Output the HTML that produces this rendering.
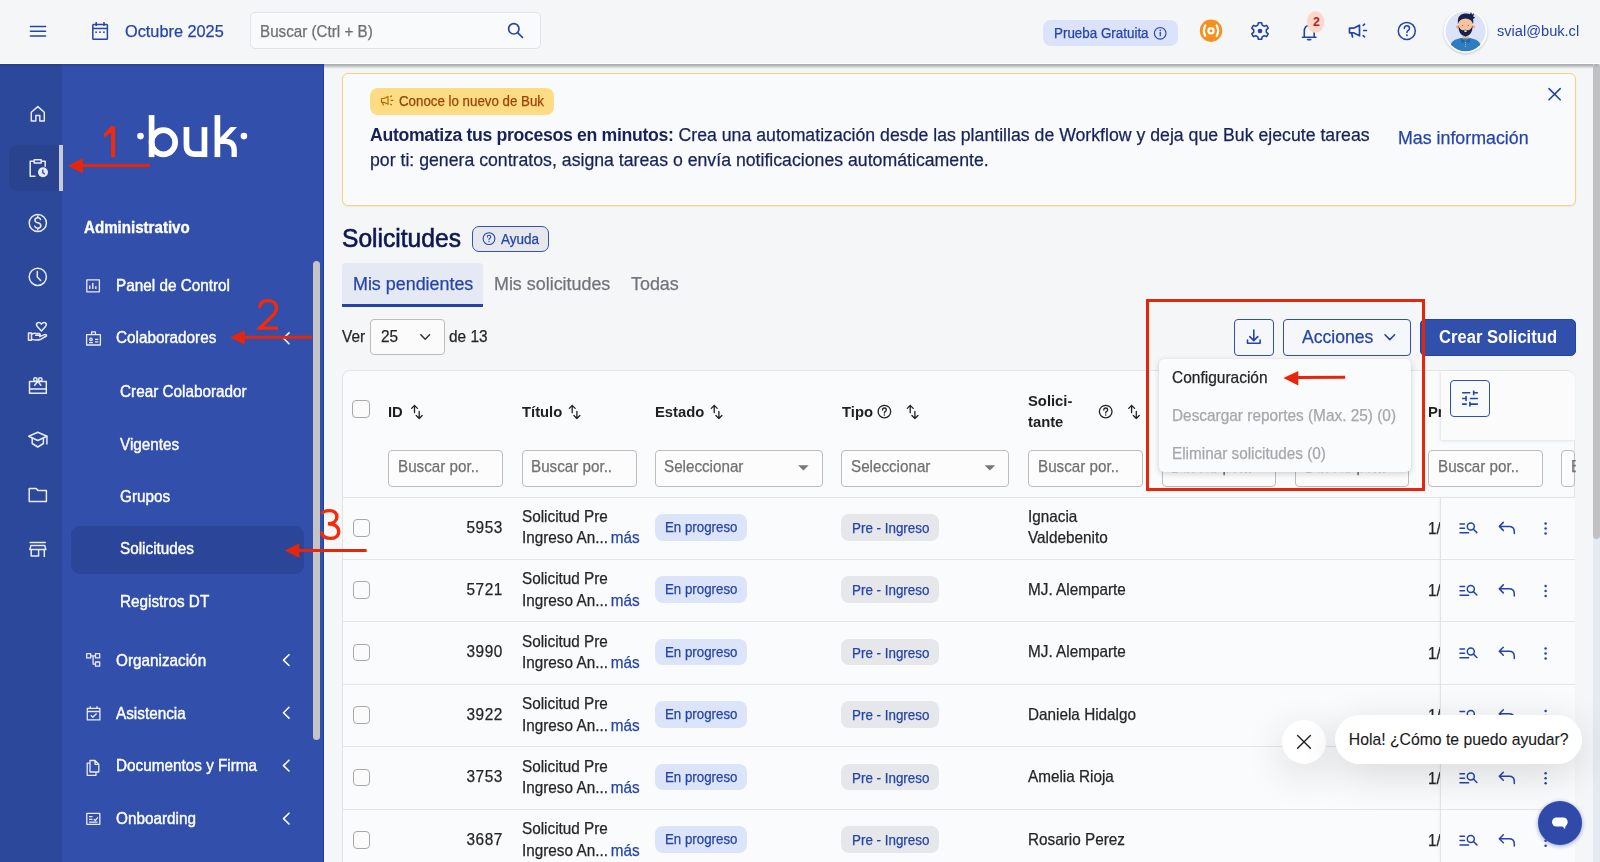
<!DOCTYPE html>
<html lang="es">
<head>
<meta charset="utf-8">
<title>Solicitudes - Buk</title>
<style>
*{box-sizing:border-box;margin:0;padding:0}
html,body{width:1600px;height:862px;overflow:hidden}
body{position:relative;background:#f5f6f8;font-family:"Liberation Sans",sans-serif;color:#262626}
.a{position:absolute}
.t{position:absolute;line-height:1;white-space:nowrap;-webkit-text-stroke-width:0.25px}
b,.bd{-webkit-text-stroke-width:0!important}
svg{position:absolute;overflow:visible}
/* header */
#hdr{position:absolute;left:0;top:0;width:1600px;height:64px;background:#f5f6f8;border-bottom:1px solid #fff;z-index:5;box-shadow:0 1px 3px rgba(0,0,0,.18)}
.blue{color:#2444ab}
/* rail */
#rail{position:absolute;left:0;top:64px;width:62px;height:798px;background:#2c489b}
#side{position:absolute;left:62px;top:64px;width:262px;height:798px;background:#314fab;border-right:1.5px solid #1a43a8}
.mi{color:#fff;font-size:16.07px;-webkit-text-stroke-width:0.4px!important}
.ico{stroke:#e9ecf5;fill:none;stroke-width:1.5;stroke-linecap:round;stroke-linejoin:round}
.sico{stroke:#e9ecf5;fill:none;stroke-width:1.3;stroke-linejoin:round}
.red{color:#e5220c}
</style>
</head>
<body>

<!-- ============ HEADER ============ -->
<div id="hdr">
  <div class="a" style="left:250px;top:12px;width:291px;height:37px;border:1px solid #e2e4e9;border-radius:5px;background:#f9fafb"></div>
  <div class="t" style="transform:scaleX(0.9524);transform-origin:0 0;left:260px;top:23.5px;font-size:15.96px;color:#6f6f6f">Buscar (Ctrl + B)</div>
  <div class="t blue" style="transform:scaleX(0.9524);transform-origin:0 0;left:125px;top:22.5px;font-size:17.12px">Octubre 2025</div>
  <svg width="1600" height="64" style="left:0;top:0">
    <g stroke="#2444ab" stroke-width="1.6" stroke-linecap="round">
      <line x1="30.5" y1="26.5" x2="45.5" y2="26.5"/>
      <line x1="30.5" y1="31.3" x2="45.5" y2="31.3"/>
      <line x1="30.5" y1="36" x2="45.5" y2="36"/>
    </g>
    <g stroke="#2444ab" stroke-width="1.5" fill="none">
      <rect x="92.8" y="24.5" width="14.6" height="14.8" rx="0.8"/>
      <line x1="92.8" y1="28.5" x2="107.4" y2="28.5"/>
      <line x1="96.2" y1="22" x2="96.2" y2="26"/>
      <line x1="104" y1="22" x2="104" y2="26"/>
    </g>
    <g fill="#2444ab"><rect x="95.3" y="31.4" width="1.6" height="1.6"/><rect x="99.2" y="31.4" width="1.6" height="1.6"/><rect x="103.1" y="31.4" width="1.6" height="1.6"/></g>
    <g stroke="#2444ab" stroke-width="1.7" fill="none" stroke-linecap="round">
      <circle cx="513.8" cy="28.8" r="5.2"/>
      <line x1="517.6" y1="32.6" x2="522.5" y2="37.5"/>
    </g>
  </svg>
  <!-- right side -->
  <div class="a" style="left:1043px;top:20px;width:135px;height:26px;border-radius:8px;background:#dbe3fa"></div>
  <div class="t blue" style="transform:scaleX(0.9524);transform-origin:0 0;left:1053.5px;top:26px;font-size:14.07px">Prueba Gratuita</div>
  <svg width="1600" height="64" style="left:0;top:0">
    <g stroke="#2444ab" stroke-width="1.1" fill="none"><circle cx="1160.2" cy="33.3" r="5.8"/></g>
    <g fill="#2444ab"><rect x="1159.6" y="32" width="1.3" height="4.2"/><circle cx="1160.25" cy="30.4" r="0.8"/></g>
    <!-- orange icon -->
    <circle cx="1211" cy="30.7" r="11.2" fill="#f7911d"/>
    <g fill="none" stroke="#fff" stroke-width="2.2" stroke-linecap="round">
      <path d="M1205.3 25.5 Q1202.5 30.7 1205.3 35.9"/>
      <path d="M1216.7 25.5 Q1219.5 30.7 1216.7 35.9"/>
      <circle cx="1211" cy="30.7" r="2.6"/>
    </g>
    <!-- gear -->
    <g transform="translate(1260,31)" fill="none" stroke="#2444ab" stroke-width="1.6" stroke-linejoin="round">
      <path d="M-1.6 -8.3 L1.6 -8.3 L2.2 -5.9 L4.2 -4.8 L6.6 -5.6 L8.2 -2.9 L6.3 -1.2 L6.3 1.2 L8.2 2.9 L6.6 5.6 L4.2 4.8 L2.2 5.9 L1.6 8.3 L-1.6 8.3 L-2.2 5.9 L-4.2 4.8 L-6.6 5.6 L-8.2 2.9 L-6.3 1.2 L-6.3 -1.2 L-8.2 -2.9 L-6.6 -5.6 L-4.2 -4.8 L-2.2 -5.9 Z"/>
    </g>
    <circle cx="1260" cy="31" r="2.3" fill="#2444ab"/>
    <!-- bell -->
    <g fill="none" stroke="#2444ab" stroke-width="1.6" stroke-linecap="round" stroke-linejoin="round">
      <path d="M1302.5 37.2 H1316 M1304.3 37.2 V31.5 Q1304.3 25.5 1309.2 25.5 Q1314.2 25.5 1314.2 31.5 V37.2"/>
      <path d="M1307.7 39.6 H1310.7"/>
    </g>
    <ellipse cx="1315.6" cy="22" rx="8.6" ry="11" fill="#fdd8c8"/>
    <!-- megaphone -->
    <g fill="none" stroke="#2444ab" stroke-width="1.7" stroke-linejoin="round" stroke-linecap="round">
      <path d="M1349.5 28.2 H1353.5 L1359.5 25.2 V35.8 L1353.5 32.8 H1349.5 Z"/>
      <path d="M1351.5 33 L1352.6 37"/>
      <path d="M1363.2 25.3 L1364.6 24.2 M1363.8 30.5 H1366.4 M1363.2 35.7 L1364.6 36.8"/>
    </g>
    <!-- help -->
    <g fill="none" stroke="#2444ab" stroke-width="1.5" stroke-linecap="round">
      <circle cx="1406.8" cy="30.9" r="8.5"/>
      <path d="M1404.3 28.6 Q1404.3 25.8 1406.9 25.8 Q1409.5 25.8 1409.5 28.3 Q1409.5 30 1407.7 30.8 Q1406.9 31.3 1406.9 32.6"/>
    </g>
    <circle cx="1406.9" cy="35.3" r="0.95" fill="#2444ab"/>
    <!-- avatar -->
    <circle cx="1465.6" cy="31.2" r="21.8" fill="#fff" style="filter:drop-shadow(0 1px 1.2px rgba(0,0,0,.2))"/>
    <circle cx="1465.6" cy="31.2" r="20" fill="#dce3f8"/>
    <defs><clipPath id="avc"><circle cx="1465.6" cy="31.2" r="20"/></clipPath></defs>
    <g clip-path="url(#avc)">
      <path d="M1449.5 49 Q1450 40.5 1458 38.8 L1465.5 37.2 L1473 38.8 Q1481 40.5 1481.8 49 Q1474 54 1465.5 54 Q1457 54 1449.5 49 Z" fill="#2d7dc0"/>
      <rect x="1462.6" y="33.5" width="5.8" height="5" fill="#eeb08a"/>
      <path d="M1460 38 L1465.5 41.2 L1471 38 L1468.8 43.6 L1465.5 40.8 L1462.2 43.6 Z" fill="#1e64a3"/>
      <g fill="#c9a46a"><circle cx="1465.5" cy="42.2" r="0.55"/><circle cx="1465.5" cy="44.4" r="0.55"/><circle cx="1465.5" cy="46.4" r="0.55"/></g>
      <circle cx="1457.6" cy="26.8" r="1.6" fill="#eea985"/><circle cx="1473.4" cy="26.8" r="1.6" fill="#eea985"/>
      <ellipse cx="1465.5" cy="25.2" rx="6.8" ry="8.6" fill="#f6c39c"/>
      <path d="M1458.4 25 Q1458.3 35.8 1465.5 36.4 Q1472.7 35.8 1472.6 25 Q1471.6 29.6 1468.2 30.2 Q1465.5 29.2 1462.8 30.2 Q1459.4 29.6 1458.4 25 Z" fill="#17224a"/>
      <rect x="1464.4" y="30.3" width="2.2" height="1.6" fill="#fff"/>
      <path d="M1457.9 24.2 Q1456.8 14.6 1464.5 13.6 Q1468 13.1 1470 14.2 L1471 12 L1472.1 14.6 L1474.2 13.2 L1473.2 16.4 L1475.2 17.4 L1473.1 19 Q1473.7 22 1473 24.2 Q1471.6 18.6 1465.5 18.4 Q1459.4 18.6 1457.9 24.2 Z" fill="#17224a"/>
      <g fill="#8a6a55"><circle cx="1462.6" cy="25.4" r="0.6"/><circle cx="1468.4" cy="25.4" r="0.6"/></g>
    </g>
  </svg>
  <div class="t bd" style="left:1313px;top:16px;font-size:12.5px;font-weight:700;color:#b3222b">2</div>
  <div class="t blue" style="transform:scaleX(0.9524);transform-origin:0 0;left:1497px;top:22.6px;font-size:15.33px;-webkit-text-stroke-width:0">svial@buk.cl</div>
</div>

<!-- ============ RAIL + SIDEBAR ============ -->
<div id="rail"></div>
<div id="side"></div>
<!-- active rail item -->
<div class="a" style="left:9px;top:145px;width:50px;height:46px;background:#29438f;border-radius:8px 0 0 8px"></div>
<div class="a" style="left:58.5px;top:145px;width:4px;height:46px;background:#c9ccd6"></div>
<svg width="62" height="862" style="left:0;top:0">
 <g class="ico">
  <!-- home -->
  <path d="M31.3 120.9 V112.2 L37.8 106.6 L44.3 112.2 V120.9 H39.8 V115.6 H35.8 V120.9 Z"/>
  <!-- clipboard clock -->
  <path d="M35 176.3 H30.2 V161.3 H33.5 M42 161.3 H45.2 V166.3"/>
  <path d="M34.2 159.7 H41.2 V163 H34.2 Z"/>
  <!-- dollar -->
  <circle cx="37.8" cy="223" r="8.6"/>
  <path d="M40.6 219.6 Q40 217.8 37.8 217.8 Q35 217.8 35 220.3 Q35 222.3 37.8 222.8 Q40.8 223.4 40.8 225.8 Q40.8 228.2 37.8 228.2 Q35.3 228.2 34.8 226.3 M37.8 216 V217.8 M37.8 228.2 V230"/>
  <!-- clock -->
  <circle cx="37.8" cy="276.8" r="8.6"/>
  <path d="M37.3 271.6 V277 L40.6 280.5"/>
  <!-- hand heart -->
  <path d="M28.5 333 H31.5 V340.3 H28.5 Z M31.5 334.2 Q34.5 332.8 37 333.6 H39.5 Q41 334.3 39.5 335.3 H35.6 M31.5 339.1 Q36.5 341 41 339.2 L46.4 336 Q46.8 334.5 45.2 334.4 L39.6 336.6"/>
  <path d="M41.4 331 L37.3 326.6 Q35.6 324.3 37.4 322.9 Q39.6 321.8 41.4 324.1 Q43.2 321.8 45.4 322.9 Q47.2 324.3 45.5 326.6 Z"/>
  <!-- gift -->
  <path d="M29.5 381.6 H46.3 V393.3 H29.5 Z M29.5 388.9 H46.3"/>
  <circle cx="35.4" cy="379.5" r="1.7"/><circle cx="40.3" cy="379.5" r="1.7"/><path d="M37.8 381.2 L34.7 385.2 M37.8 381.2 L40.9 385.2"/>
  <!-- grad cap -->
  <path d="M28.7 436.2 L37.8 432.3 L46.9 436.2 L37.8 440.5 Z"/>
  <path d="M32.2 438.2 V443.5 L37.8 447 L43.4 443.5 V438.2 M46.9 436.2 V444"/>
  <!-- folder -->
  <path d="M29.2 488.6 H36.2 L38.2 490.6 H46.4 V501.4 H29.2 Z"/>
  <!-- store -->
  <path d="M30.1 542.5 H45.3 M30.9 545.6 H44.8 L45.8 549.6 H29.8 Z M31.2 549.6 V555.9 H38.6 V549.6 M44.3 549.6 V556.4"/>
 </g>
 <!-- clock badge on clipboard -->
 <circle cx="43" cy="172.2" r="5" fill="#e9ecf5"/>
 <path d="M42.8 169.6 V172.6 L44.8 174.2" stroke="#2c489b" stroke-width="1.3" fill="none"/>
</svg>

<!-- logo -->
<svg width="330" height="862" style="left:0;top:0">
 <g fill="#fff">
  <circle cx="140.5" cy="136.1" r="3.3"/>
  <circle cx="243.9" cy="136.1" r="3.3"/>
 </g>
 <g fill="none" stroke="#fff" stroke-width="5.7">
  <line x1="151.6" y1="115.1" x2="151.6" y2="157.1"/>
  <ellipse cx="163.4" cy="142.2" rx="11.8" ry="12.1"/>
  <path d="M186.45 127.1 V145 Q186.45 154.2 195.4 154.2 H204.45"/>
  <line x1="204.45" y1="127.1" x2="204.45" y2="157.1"/>
  <line x1="217.4" y1="115.1" x2="217.4" y2="157.1"/>
 </g>
 <path d="M219.5 138.6 L230.6 127.1 H237 L223.8 141.5 Z" fill="#fff"/>
 <path d="M219 141.4 H225.5 Q234.2 141.6 234.2 150.5 V157.1" fill="none" stroke="#fff" stroke-width="5.3"/>
</svg>

<div class="t bd" style="transform:scaleX(0.9524);transform-origin:0 0;left:84.2px;top:220.4px;font-size:15.86px;font-weight:700;color:#fff;-webkit-text-stroke:0.35px #fff!important">Administrativo</div>

<!-- menu items -->
<div class="t mi" style="transform:scaleX(0.9524);transform-origin:0 0;left:115.5px;top:277px">Panel de Control</div>
<div class="t mi" style="transform:scaleX(0.9524);transform-origin:0 0;left:115.5px;top:329.4px">Colaboradores</div>
<div class="t mi" style="transform:scaleX(0.9524);transform-origin:0 0;left:120.3px;top:383.3px">Crear Colaborador</div>
<div class="t mi" style="transform:scaleX(0.9524);transform-origin:0 0;left:120.3px;top:436.1px">Vigentes</div>
<div class="a" style="left:71px;top:526px;width:233px;height:47.5px;background:#2b4699;border-radius:9px"></div>
<div class="t mi" style="transform:scaleX(0.9524);transform-origin:0 0;left:120.3px;top:488px">Grupos</div>
<div class="t mi" style="transform:scaleX(0.9524);transform-origin:0 0;left:120.3px;top:540.2px">Solicitudes</div>
<div class="t mi" style="transform:scaleX(0.9524);transform-origin:0 0;left:120.3px;top:593px">Registros DT</div>
<div class="t mi" style="transform:scaleX(0.9524);transform-origin:0 0;left:115.5px;top:651.5px">Organización</div>
<div class="t mi" style="transform:scaleX(0.9524);transform-origin:0 0;left:115.5px;top:704.5px">Asistencia</div>
<div class="t mi" style="transform:scaleX(0.9524);transform-origin:0 0;left:115.5px;top:757px">Documentos y Firma</div>
<div class="t mi" style="transform:scaleX(0.9524);transform-origin:0 0;left:115.5px;top:810.3px">Onboarding</div>

<svg width="330" height="862" style="left:0;top:0">
 <g class="sico">
  <!-- panel -->
  <rect x="86.8" y="279.8" width="12.6" height="12" />
  <path d="M89.8 289 V285.5 M92.8 289 V283 M95.8 289 V286.3" stroke-width="1.4"/>
  <!-- colaboradores id badge -->
  <rect x="86.6" y="334.6" width="13.8" height="10.4"/>
  <path d="M91.6 334.6 V331.8 H95.4 V334.6"/>
  <path d="M89 342.6 H93 M95 339.3 H98.3 M95 341.8 H98.3"/>
  <circle cx="91" cy="339.4" r="1.2"/>
  <!-- org -->
  <path d="M86.7 653.7 H90.7 V657.9 H86.7 Z M95.5 653.7 H99.7 V657.9 H95.5 Z M95.5 662 H99.7 V666.2 H95.5 Z M90.7 655.8 H95.5 M93.1 655.8 V664.1 H95.5"/>
  <!-- calendar check -->
  <rect x="87.3" y="708.3" width="12.6" height="11.6"/>
  <path d="M87.3 711.5 H99.9 M90.2 706.2 V709 M97 706.2 V709 M90.8 715.3 L92.8 717.3 L96.6 713.5"/>
  <!-- documents -->
  <path d="M90 760.5 H95 L98.8 764.3 V772 H90 Z M95 760.5 V764.3 H98.8"/>
  <path d="M90 763.2 H87.2 V775.3 H96 V772"/>
  <!-- onboarding -->
  <rect x="86.8" y="813.3" width="13" height="11"/>
  <path d="M89 816.7 H92.5 M89 819.4 H92.5 M89 822.2 H97.5 M93.8 819.3 L95.3 820.6 L97.8 817.3"/>
 </g>
 <g fill="none" stroke="#fff" stroke-width="1.6" stroke-linecap="round" stroke-linejoin="round">
  <path d="M289 332.9 L283.5 338.3 L289 343.7"/>
  <path d="M289 654.7 L283.5 660.1 L289 665.5"/>
  <path d="M289 707.3 L283.5 712.7 L289 718.1"/>
  <path d="M289 760.2 L283.5 765.6 L289 771"/>
  <path d="M289 813.2 L283.5 818.6 L289 824"/>
 </g>
</svg>

<!-- sidebar scrollbar -->
<div class="a" style="left:313px;top:261px;width:7.2px;height:479px;background:#c4c4c6;border-radius:4px"></div>

<!-- ============ MAIN ============ -->
<!-- header shadow on content -->
<div class="a" style="left:324px;top:64px;width:1276px;height:5px;background:linear-gradient(#c4c5c8 0,#c4c5c8 1.5px,rgba(245,246,248,0))"></div>
<!-- page scrollbar -->
<div class="a" style="left:1593.2px;top:64px;width:6.8px;height:798px;background:#e5e9f4"></div>
<div class="a" style="left:1593.2px;top:64px;width:6.8px;height:475px;background:#c1c1c3;border-radius:3.4px"></div>

<!-- banner -->
<div class="a" style="left:342px;top:73px;width:1234px;height:132.5px;border:1.5px solid #f6d37c;border-radius:6px;background:#f9fafc;box-shadow:0 1px 2px rgba(0,0,0,.06)"></div>
<div class="a" style="left:370px;top:87.5px;width:184px;height:27px;border-radius:8px;background:#fddc83"></div>
<svg width="1600" height="220" style="left:0;top:0">
  <g fill="none" stroke="#b26a10" stroke-width="1.2" stroke-linejoin="round" stroke-linecap="round">
    <path d="M381.5 98.5 H384 L388 96.5 V104.3 L384 102.3 H381.5 Z M382.6 102.5 L383.3 105"/>
    <path d="M390.6 96.6 L391.5 96 M391 100.4 H392.8 M390.6 104.2 L391.5 104.8"/>
  </g>
  <g fill="none" stroke="#2444ab" stroke-width="1.6" stroke-linecap="round">
    <path d="M1549 88.6 L1560.2 99.8 M1560.2 88.6 L1549 99.8"/>
  </g>
</svg>
<div class="t" style="transform:scaleX(0.9524);transform-origin:0 0;left:399px;top:94.9px;font-size:13.97px;color:#9a4408">Conoce lo nuevo de Buk</div>
<div class="t" style="transform:scaleX(0.9524);transform-origin:0 0;left:370px;top:125.5px;font-size:18.59px;color:#17215a"><b style="letter-spacing:-0.36px">Automatiza tus procesos en minutos:</b> Crea una automatización desde las plantillas de Workflow y deja que Buk ejecute tareas</div>
<div class="t" style="transform:scaleX(0.9524);transform-origin:0 0;left:370px;top:150.5px;font-size:18.59px;color:#17215a">por ti: genera contratos, asigna tareas o envía notificaciones automáticamente.</div>
<div class="t" style="transform:scaleX(0.9524);transform-origin:0 0;left:1398px;top:129.3px;font-size:18.69px;color:#2444ab">Mas información</div>

<!-- heading -->
<div class="t" style="transform:scaleX(0.9524);transform-origin:0 0;left:342.3px;top:225.5px;font-size:25.83px;color:#0d174f;-webkit-text-stroke-width:0.6px">Solicitudes</div>
<div class="a" style="left:472px;top:225.6px;width:77px;height:26px;border:1.3px solid #3553b0;border-radius:7px;background:#e6e8ee"></div>
<svg width="1600" height="300" style="left:0;top:0">
  <g fill="none" stroke="#2444ab" stroke-width="1.1" stroke-linecap="round">
    <circle cx="489" cy="238.6" r="5.9"/>
    <path d="M487.3 237 Q487.3 235.2 489 235.2 Q490.7 235.2 490.7 236.8 Q490.7 237.9 489.6 238.4 Q489 238.8 489 239.7"/>
  </g>
  <circle cx="489" cy="241.6" r="0.7" fill="#2444ab"/>
</svg>
<div class="t" style="transform:scaleX(0.9524);transform-origin:0 0;left:501px;top:231.5px;font-size:14.18px;color:#2444ab">Ayuda</div>

<!-- tabs -->
<div class="a" style="left:342.3px;top:263px;width:140.5px;height:43.5px;background:#e5e9f3;border-radius:4px 4px 0 0;border-bottom:3px solid #2444ab"></div>
<div class="t" style="transform:scaleX(0.9524);transform-origin:0 0;left:352.9px;top:274.5px;font-size:18.79px;color:#2444ab">Mis pendientes</div>
<div class="t" style="transform:scaleX(0.9524);transform-origin:0 0;left:494px;top:274.5px;font-size:18.79px;color:#70737b">Mis solicitudes</div>
<div class="t" style="transform:scaleX(0.9524);transform-origin:0 0;left:631px;top:274.5px;font-size:18.79px;color:#70737b">Todas</div>

<!-- ver -->
<div class="t" style="transform:scaleX(0.9524);transform-origin:0 0;left:342.3px;top:328px;font-size:16.17px;color:#262626">Ver</div>
<div class="a" style="left:370.2px;top:319.3px;width:74.4px;height:36.2px;border:1px solid #bcbcbc;border-radius:4px;background:#fbfbfc"></div>
<div class="t" style="transform:scaleX(0.9524);transform-origin:0 0;left:380.5px;top:328px;font-size:16.17px;color:#262626">25</div>
<svg width="1600" height="400" style="left:0;top:0">
  <path d="M420.8 334.8 L425.2 339.2 L429.6 334.8" fill="none" stroke="#333" stroke-width="1.5" stroke-linecap="round" stroke-linejoin="round"/>
</svg>
<div class="t" style="transform:scaleX(0.9524);transform-origin:0 0;left:449px;top:328px;font-size:16.17px;color:#262626">de 13</div>

<!-- buttons -->
<div class="a" style="left:1233.7px;top:318.8px;width:40.3px;height:37.6px;border:1.3px solid #3050ad;border-radius:4px;background:#f6f7fa"></div>
<svg width="1600" height="400" style="left:0;top:0">
  <g fill="none" stroke="#2444ab" stroke-width="1.6" stroke-linecap="round" stroke-linejoin="round">
    <path d="M1253.8 330 V340.5 M1249.8 336.6 L1253.8 340.6 L1257.8 336.6 M1247.5 340 V343.2 H1260.1 V340"/>
  </g>
</svg>
<div class="a" style="left:1282.8px;top:318.8px;width:128px;height:37.6px;border:1.3px solid #3050ad;border-radius:4px;background:#f6f7fa"></div>
<div class="t" style="transform:scaleX(0.9524);transform-origin:0 0;left:1301.9px;top:327.5px;font-size:18.48px;color:#2444ab">Acciones</div>
<svg width="1600" height="400" style="left:0;top:0">
  <path d="M1385 334.8 L1389.8 339.6 L1394.6 334.8" fill="none" stroke="#2444ab" stroke-width="1.6" stroke-linecap="round" stroke-linejoin="round"/>
</svg>
<div class="a" style="left:1420.2px;top:318.8px;width:155.4px;height:37.6px;border-radius:5px;background:#3150ac;border:1px solid #2443a5"></div>
<div class="t bd" style="transform:scaleX(0.9524);transform-origin:0 0;left:1438.5px;top:328.5px;font-size:17.43px;font-weight:700;color:#fff">Crear Solicitud</div>

<!-- ============ TABLE ============ -->
<div class="a" style="left:341.9px;top:369.8px;width:1233.6px;height:520px;border:1px solid #e3e4e8;border-radius:8px;background:#fafbfc"></div>
<div class="a" style="left:352.3px;top:400.2px;width:17.5px;height:17.5px;border:1.3px solid #a9a9ab;border-radius:4px;background:#fbfbfc"></div>
<div class="t bd" style="transform:scaleX(0.9524);transform-origin:0 0;left:387.8px;top:403.5px;font-size:15.54px;font-weight:700;color:#1f1f1f">ID</div>
<div class="t bd" style="transform:scaleX(0.9524);transform-origin:0 0;left:521.5px;top:403.5px;font-size:15.54px;font-weight:700;color:#1f1f1f">Título</div>
<div class="t bd" style="transform:scaleX(0.9524);transform-origin:0 0;left:654.6px;top:403.5px;font-size:15.54px;font-weight:700;color:#1f1f1f">Estado</div>
<div class="t bd" style="transform:scaleX(0.9524);transform-origin:0 0;left:841.7px;top:403.5px;font-size:15.54px;font-weight:700;color:#1f1f1f">Tipo</div>
<div class="t bd" style="transform:scaleX(0.9524);transform-origin:0 0;left:1028px;top:392.5px;font-size:15.54px;font-weight:700;color:#1f1f1f">Solici-</div>
<div class="t bd" style="transform:scaleX(0.9524);transform-origin:0 0;left:1028px;top:413.6px;font-size:15.54px;font-weight:700;color:#1f1f1f">tante</div>
<div class="t bd" style="transform:scaleX(0.9524);transform-origin:0 0;left:1428.2px;top:403.5px;font-size:15.54px;font-weight:700;color:#1f1f1f">Pr</div>
<svg width="1600" height="862" style="left:0;top:0">
 <g fill="none" stroke="#222" stroke-width="1.3" stroke-linecap="round" stroke-linejoin="round">
  <path d="M414.5 412.7 V405.4 M411.6 408.4 L414.5 405.4 L417.5 408.4 M419.2 411.4 V418.5 M416.2 415.5 L419.2 418.5 L422.2 415.5"/>
  <path d="M572.2 412.7 V405.4 M569.3 408.4 L572.2 405.4 L575.2 408.4 M576.9 411.4 V418.5 M573.9 415.5 L576.9 418.5 L579.9 415.5"/>
  <path d="M714.2 412.7 V405.4 M711.3 408.4 L714.2 405.4 L717.2 408.4 M718.9 411.4 V418.5 M715.9 415.5 L718.9 418.5 L721.9 415.5"/>
  <path d="M910.2 412.7 V405.4 M907.3 408.4 L910.2 405.4 L913.2 408.4 M914.9 411.4 V418.5 M911.9 415.5 L914.9 418.5 L917.9 415.5"/>
  <path d="M1131.6 412.7 V405.4 M1128.7 408.4 L1131.6 405.4 L1134.6 408.4 M1136.3 411.4 V418.5 M1133.3 415.5 L1136.3 418.5 L1139.3 415.5"/>
  <circle cx="884.4" cy="411.6" r="6.3"/>
  <path d="M882.5 410 Q882.5 408 884.4 408 Q886.3 408 886.3 409.8 Q886.3 411 885.1 411.5 Q884.4 412 884.4 413"/>
  <circle cx="1105.7" cy="411.6" r="6.3"/>
  <path d="M1103.8 410 Q1103.8 408 1105.7 408 Q1107.6 408 1107.6 409.8 Q1107.6 411 1106.4 411.5 Q1105.7 412 1105.7 413"/>
 </g>
 <circle cx="884.4" cy="415" r="0.75" fill="#222"/>
 <circle cx="1105.7" cy="415" r="0.75" fill="#222"/>
</svg>
<div class="a" style="left:388px;top:449.5px;width:115px;height:37px;border:1px solid #bdbdbf;border-radius:4px;background:#fcfcfd"></div>
<div class="t" style="transform:scaleX(0.9524);transform-origin:0 0;left:397.5px;top:459px;font-size:15.96px;color:#717171">Buscar por..</div>
<div class="a" style="left:521.5px;top:449.5px;width:115px;height:37px;border:1px solid #bdbdbf;border-radius:4px;background:#fcfcfd"></div>
<div class="t" style="transform:scaleX(0.9524);transform-origin:0 0;left:531.0px;top:459px;font-size:15.96px;color:#717171">Buscar por..</div>
<div class="a" style="left:654.6px;top:449.5px;width:168.3px;height:37px;border:1px solid #bdbdbf;border-radius:4px;background:#fcfcfd"></div>
<div class="t" style="transform:scaleX(0.9524);transform-origin:0 0;left:664.1px;top:459px;font-size:15.96px;color:#717171">Seleccionar</div>
<svg width="1600" height="862" style="left:0;top:0"><path d="M798.1 465.3 H808.7 L803.4 470.6 Z" fill="#777"/></svg>
<div class="a" style="left:841.1px;top:449.5px;width:168.3px;height:37px;border:1px solid #bdbdbf;border-radius:4px;background:#fcfcfd"></div>
<div class="t" style="transform:scaleX(0.9524);transform-origin:0 0;left:850.6px;top:459px;font-size:15.96px;color:#717171">Seleccionar</div>
<svg width="1600" height="862" style="left:0;top:0"><path d="M984.6 465.3 H995.2 L989.9 470.6 Z" fill="#777"/></svg>
<div class="a" style="left:1028px;top:449.5px;width:114.7px;height:37px;border:1px solid #bdbdbf;border-radius:4px;background:#fcfcfd"></div>
<div class="t" style="transform:scaleX(0.9524);transform-origin:0 0;left:1037.5px;top:459px;font-size:15.96px;color:#717171">Buscar por..</div>
<div class="a" style="left:1161.7px;top:449.5px;width:114.3px;height:37px;border:1px solid #bdbdbf;border-radius:4px;background:#fcfcfd"></div>
<div class="t" style="transform:scaleX(0.9524);transform-origin:0 0;left:1171.2px;top:459px;font-size:15.96px;color:#717171">Buscar por..</div>
<div class="a" style="left:1295px;top:449.5px;width:114px;height:37px;border:1px solid #bdbdbf;border-radius:4px;background:#fcfcfd"></div>
<div class="t" style="transform:scaleX(0.9524);transform-origin:0 0;left:1304.5px;top:459px;font-size:15.96px;color:#717171">Buscar por..</div>
<div class="a" style="left:1428.2px;top:449.5px;width:114.5px;height:37px;border:1px solid #bdbdbf;border-radius:4px;background:#fcfcfd"></div>
<div class="t" style="transform:scaleX(0.9524);transform-origin:0 0;left:1437.7px;top:459px;font-size:15.96px;color:#717171">Buscar por..</div>
<div class="a" style="left:1561px;top:449.5px;width:14px;border-right:none;border-radius:4px 0 0 4px;height:37px;border:1px solid #bdbdbf;border-radius:4px;background:#fcfcfd"></div>
<div class="t" style="transform:scaleX(0.9524);transform-origin:0 0;left:1570.5px;top:459px;font-size:15.96px;color:#717171;width:4.5px;overflow:hidden">Buscar por..</div>
<div class="a" style="left:343px;top:496.50px;width:1232px;height:1px;background:#e4e5e8"></div>
<div class="a" style="left:352.5px;top:519.00px;width:17.5px;height:17.5px;border:1.3px solid #a9a9ab;border-radius:4px;background:#fbfbfc"></div>
<div class="t" style="transform:scaleX(0.9524);transform-origin:100% 0;left:442.9px;width:60px;text-align:right;top:518.50px;font-size:16.17px;color:#262626;letter-spacing:0.6px">5953</div>
<div class="t" style="transform:scaleX(0.9524);transform-origin:0 0;left:521.5px;top:507.80px;font-size:16.07px;color:#262626">Solicitud Pre</div>
<div class="t" style="transform:scaleX(0.9524);transform-origin:0 0;left:521.5px;top:529.30px;font-size:16.07px;color:#262626">Ingreso An...<span style="color:#2444ab;margin-left:3px">más</span></div>
<div class="a" style="left:654.6px;top:514.00px;width:92px;height:26.5px;border-radius:8px;background:#dce4fa"></div>
<div class="t" style="transform:scaleX(0.9524);transform-origin:0 0;left:664.5px;top:521.00px;font-size:13.97px;color:#2444ab">En progreso</div>
<div class="a" style="left:841.1px;top:514.00px;width:97.5px;height:26.5px;border-radius:8px;background:#e6e7ea"></div>
<div class="t" style="transform:scaleX(0.9524);transform-origin:0 0;left:851.7px;top:521.00px;font-size:14.07px;color:#2444ab">Pre - Ingreso</div>
<div class="t" style="transform:scaleX(0.9524);transform-origin:0 0;left:1028px;top:507.80px;font-size:16.07px;color:#262626">Ignacia</div>
<div class="t" style="transform:scaleX(0.9524);transform-origin:0 0;left:1028px;top:529.30px;font-size:16.07px;color:#262626">Valdebenito</div>
<div class="t" style="transform:scaleX(0.9524);transform-origin:0 0;left:1427.8px;top:520.00px;font-size:16.07px;color:#262626">1/</div>
<div class="a" style="left:343px;top:558.96px;width:1232px;height:1px;background:#e4e5e8"></div>
<div class="a" style="left:352.5px;top:581.46px;width:17.5px;height:17.5px;border:1.3px solid #a9a9ab;border-radius:4px;background:#fbfbfc"></div>
<div class="t" style="transform:scaleX(0.9524);transform-origin:100% 0;left:442.9px;width:60px;text-align:right;top:580.96px;font-size:16.17px;color:#262626;letter-spacing:0.6px">5721</div>
<div class="t" style="transform:scaleX(0.9524);transform-origin:0 0;left:521.5px;top:570.26px;font-size:16.07px;color:#262626">Solicitud Pre</div>
<div class="t" style="transform:scaleX(0.9524);transform-origin:0 0;left:521.5px;top:591.76px;font-size:16.07px;color:#262626">Ingreso An...<span style="color:#2444ab;margin-left:3px">más</span></div>
<div class="a" style="left:654.6px;top:576.46px;width:92px;height:26.5px;border-radius:8px;background:#dce4fa"></div>
<div class="t" style="transform:scaleX(0.9524);transform-origin:0 0;left:664.5px;top:583.46px;font-size:13.97px;color:#2444ab">En progreso</div>
<div class="a" style="left:841.1px;top:576.46px;width:97.5px;height:26.5px;border-radius:8px;background:#e6e7ea"></div>
<div class="t" style="transform:scaleX(0.9524);transform-origin:0 0;left:851.7px;top:583.46px;font-size:14.07px;color:#2444ab">Pre - Ingreso</div>
<div class="t" style="transform:scaleX(0.9524);transform-origin:0 0;left:1028px;top:580.96px;font-size:16.07px;color:#262626">MJ. Alemparte</div>
<div class="t" style="transform:scaleX(0.9524);transform-origin:0 0;left:1427.8px;top:582.46px;font-size:16.07px;color:#262626">1/</div>
<div class="a" style="left:343px;top:621.42px;width:1232px;height:1px;background:#e4e5e8"></div>
<div class="a" style="left:352.5px;top:643.92px;width:17.5px;height:17.5px;border:1.3px solid #a9a9ab;border-radius:4px;background:#fbfbfc"></div>
<div class="t" style="transform:scaleX(0.9524);transform-origin:100% 0;left:442.9px;width:60px;text-align:right;top:643.42px;font-size:16.17px;color:#262626;letter-spacing:0.6px">3990</div>
<div class="t" style="transform:scaleX(0.9524);transform-origin:0 0;left:521.5px;top:632.72px;font-size:16.07px;color:#262626">Solicitud Pre</div>
<div class="t" style="transform:scaleX(0.9524);transform-origin:0 0;left:521.5px;top:654.22px;font-size:16.07px;color:#262626">Ingreso An...<span style="color:#2444ab;margin-left:3px">más</span></div>
<div class="a" style="left:654.6px;top:638.92px;width:92px;height:26.5px;border-radius:8px;background:#dce4fa"></div>
<div class="t" style="transform:scaleX(0.9524);transform-origin:0 0;left:664.5px;top:645.92px;font-size:13.97px;color:#2444ab">En progreso</div>
<div class="a" style="left:841.1px;top:638.92px;width:97.5px;height:26.5px;border-radius:8px;background:#e6e7ea"></div>
<div class="t" style="transform:scaleX(0.9524);transform-origin:0 0;left:851.7px;top:645.92px;font-size:14.07px;color:#2444ab">Pre - Ingreso</div>
<div class="t" style="transform:scaleX(0.9524);transform-origin:0 0;left:1028px;top:643.42px;font-size:16.07px;color:#262626">MJ. Alemparte</div>
<div class="t" style="transform:scaleX(0.9524);transform-origin:0 0;left:1427.8px;top:644.92px;font-size:16.07px;color:#262626">1/</div>
<div class="a" style="left:343px;top:683.88px;width:1232px;height:1px;background:#e4e5e8"></div>
<div class="a" style="left:352.5px;top:706.38px;width:17.5px;height:17.5px;border:1.3px solid #a9a9ab;border-radius:4px;background:#fbfbfc"></div>
<div class="t" style="transform:scaleX(0.9524);transform-origin:100% 0;left:442.9px;width:60px;text-align:right;top:705.88px;font-size:16.17px;color:#262626;letter-spacing:0.6px">3922</div>
<div class="t" style="transform:scaleX(0.9524);transform-origin:0 0;left:521.5px;top:695.18px;font-size:16.07px;color:#262626">Solicitud Pre</div>
<div class="t" style="transform:scaleX(0.9524);transform-origin:0 0;left:521.5px;top:716.68px;font-size:16.07px;color:#262626">Ingreso An...<span style="color:#2444ab;margin-left:3px">más</span></div>
<div class="a" style="left:654.6px;top:701.38px;width:92px;height:26.5px;border-radius:8px;background:#dce4fa"></div>
<div class="t" style="transform:scaleX(0.9524);transform-origin:0 0;left:664.5px;top:708.38px;font-size:13.97px;color:#2444ab">En progreso</div>
<div class="a" style="left:841.1px;top:701.38px;width:97.5px;height:26.5px;border-radius:8px;background:#e6e7ea"></div>
<div class="t" style="transform:scaleX(0.9524);transform-origin:0 0;left:851.7px;top:708.38px;font-size:14.07px;color:#2444ab">Pre - Ingreso</div>
<div class="t" style="transform:scaleX(0.9524);transform-origin:0 0;left:1028px;top:705.88px;font-size:16.07px;color:#262626">Daniela Hidalgo</div>
<div class="t" style="transform:scaleX(0.9524);transform-origin:0 0;left:1427.8px;top:707.38px;font-size:16.07px;color:#262626">1/</div>
<div class="a" style="left:343px;top:746.34px;width:1232px;height:1px;background:#e4e5e8"></div>
<div class="a" style="left:352.5px;top:768.84px;width:17.5px;height:17.5px;border:1.3px solid #a9a9ab;border-radius:4px;background:#fbfbfc"></div>
<div class="t" style="transform:scaleX(0.9524);transform-origin:100% 0;left:442.9px;width:60px;text-align:right;top:768.34px;font-size:16.17px;color:#262626;letter-spacing:0.6px">3753</div>
<div class="t" style="transform:scaleX(0.9524);transform-origin:0 0;left:521.5px;top:757.64px;font-size:16.07px;color:#262626">Solicitud Pre</div>
<div class="t" style="transform:scaleX(0.9524);transform-origin:0 0;left:521.5px;top:779.14px;font-size:16.07px;color:#262626">Ingreso An...<span style="color:#2444ab;margin-left:3px">más</span></div>
<div class="a" style="left:654.6px;top:763.84px;width:92px;height:26.5px;border-radius:8px;background:#dce4fa"></div>
<div class="t" style="transform:scaleX(0.9524);transform-origin:0 0;left:664.5px;top:770.84px;font-size:13.97px;color:#2444ab">En progreso</div>
<div class="a" style="left:841.1px;top:763.84px;width:97.5px;height:26.5px;border-radius:8px;background:#e6e7ea"></div>
<div class="t" style="transform:scaleX(0.9524);transform-origin:0 0;left:851.7px;top:770.84px;font-size:14.07px;color:#2444ab">Pre - Ingreso</div>
<div class="t" style="transform:scaleX(0.9524);transform-origin:0 0;left:1028px;top:768.34px;font-size:16.07px;color:#262626">Amelia Rioja</div>
<div class="t" style="transform:scaleX(0.9524);transform-origin:0 0;left:1427.8px;top:769.84px;font-size:16.07px;color:#262626">1/</div>
<div class="a" style="left:343px;top:808.80px;width:1232px;height:1px;background:#e4e5e8"></div>
<div class="a" style="left:352.5px;top:831.30px;width:17.5px;height:17.5px;border:1.3px solid #a9a9ab;border-radius:4px;background:#fbfbfc"></div>
<div class="t" style="transform:scaleX(0.9524);transform-origin:100% 0;left:442.9px;width:60px;text-align:right;top:830.80px;font-size:16.17px;color:#262626;letter-spacing:0.6px">3687</div>
<div class="t" style="transform:scaleX(0.9524);transform-origin:0 0;left:521.5px;top:820.10px;font-size:16.07px;color:#262626">Solicitud Pre</div>
<div class="t" style="transform:scaleX(0.9524);transform-origin:0 0;left:521.5px;top:841.60px;font-size:16.07px;color:#262626">Ingreso An...<span style="color:#2444ab;margin-left:3px">más</span></div>
<div class="a" style="left:654.6px;top:826.30px;width:92px;height:26.5px;border-radius:8px;background:#dce4fa"></div>
<div class="t" style="transform:scaleX(0.9524);transform-origin:0 0;left:664.5px;top:833.30px;font-size:13.97px;color:#2444ab">En progreso</div>
<div class="a" style="left:841.1px;top:826.30px;width:97.5px;height:26.5px;border-radius:8px;background:#e6e7ea"></div>
<div class="t" style="transform:scaleX(0.9524);transform-origin:0 0;left:851.7px;top:833.30px;font-size:14.07px;color:#2444ab">Pre - Ingreso</div>
<div class="t" style="transform:scaleX(0.9524);transform-origin:0 0;left:1028px;top:830.80px;font-size:16.07px;color:#262626">Rosario Perez</div>
<div class="t" style="transform:scaleX(0.9524);transform-origin:0 0;left:1427.8px;top:832.30px;font-size:16.07px;color:#262626">1/</div>
<div class="a" style="left:1441px;top:497px;width:134px;height:365px;background:#fafbfc;box-shadow:-1px 0 0 #e3e4e7, -2px 0 3px rgba(0,0,0,.04)"></div>
<div class="a" style="left:1441px;top:371px;width:134px;height:69px;background:#fbfbfc;border-radius:0 8px 0 0;box-shadow:-1px 1px 3px rgba(0,0,0,.1)"></div>
<div class="a" style="left:1450.2px;top:380.2px;width:39.7px;height:37px;border:1.3px solid #3050ad;border-radius:4px;background:#f9fafc"></div>
<svg width="1600" height="862" style="left:0;top:0">
 <path d="M1462.1 392.8 H1470.3 M1473.7 392.8 H1477.9 M1473.7 390.4 V395.3 M1462.1 398.5 H1466.1 M1466.1 396.1 V400.9 M1469.9 398.5 H1477.9 M1462.1 404.1 H1466.8 M1469.9 404.1 H1477.9 M1469.9 401.7 V406.6" fill="none" stroke="#2444ab" stroke-width="1.6"/>
</svg>
<div class="a" style="left:1441px;top:496.50px;width:134px;height:1px;background:#e4e5e8"></div>
<div class="a" style="left:1441px;top:558.96px;width:134px;height:1px;background:#e4e5e8"></div>
<div class="a" style="left:1441px;top:621.42px;width:134px;height:1px;background:#e4e5e8"></div>
<div class="a" style="left:1441px;top:683.88px;width:134px;height:1px;background:#e4e5e8"></div>
<div class="a" style="left:1441px;top:746.34px;width:134px;height:1px;background:#e4e5e8"></div>
<div class="a" style="left:1441px;top:808.80px;width:134px;height:1px;background:#e4e5e8"></div>
<svg width="1600" height="862" style="left:0;top:0"><g fill="none" stroke="#2444ab" stroke-width="1.5" stroke-linecap="round" stroke-linejoin="round">
 <path d="M1460 524.00 H1464.5 M1460 528.30 H1464.5 M1460 532.80 H1468.6"/><circle cx="1470.8" cy="526.60" r="3.5"/><path d="M1473.4 529.20 L1476.9 532.60"/>
 <path d="M1503.3 522.40 L1499.3 526.40 L1503.3 530.40 M1499.5 526.40 H1509 Q1514.3 526.40 1514.3 531.60 V533.60"/>
 <path d="M1460 586.46 H1464.5 M1460 590.76 H1464.5 M1460 595.26 H1468.6"/><circle cx="1470.8" cy="589.06" r="3.5"/><path d="M1473.4 591.66 L1476.9 595.06"/>
 <path d="M1503.3 584.86 L1499.3 588.86 L1503.3 592.86 M1499.5 588.86 H1509 Q1514.3 588.86 1514.3 594.06 V596.06"/>
 <path d="M1460 648.92 H1464.5 M1460 653.22 H1464.5 M1460 657.72 H1468.6"/><circle cx="1470.8" cy="651.52" r="3.5"/><path d="M1473.4 654.12 L1476.9 657.52"/>
 <path d="M1503.3 647.32 L1499.3 651.32 L1503.3 655.32 M1499.5 651.32 H1509 Q1514.3 651.32 1514.3 656.52 V658.52"/>
 <path d="M1460 711.38 H1464.5 M1460 715.68 H1464.5 M1460 720.18 H1468.6"/><circle cx="1470.8" cy="713.98" r="3.5"/><path d="M1473.4 716.58 L1476.9 719.98"/>
 <path d="M1503.3 709.78 L1499.3 713.78 L1503.3 717.78 M1499.5 713.78 H1509 Q1514.3 713.78 1514.3 718.98 V720.98"/>
 <path d="M1460 773.84 H1464.5 M1460 778.14 H1464.5 M1460 782.64 H1468.6"/><circle cx="1470.8" cy="776.44" r="3.5"/><path d="M1473.4 779.04 L1476.9 782.44"/>
 <path d="M1503.3 772.24 L1499.3 776.24 L1503.3 780.24 M1499.5 776.24 H1509 Q1514.3 776.24 1514.3 781.44 V783.44"/>
 <path d="M1460 836.30 H1464.5 M1460 840.60 H1464.5 M1460 845.10 H1468.6"/><circle cx="1470.8" cy="838.90" r="3.5"/><path d="M1473.4 841.50 L1476.9 844.90"/>
 <path d="M1503.3 834.70 L1499.3 838.70 L1503.3 842.70 M1499.5 838.70 H1509 Q1514.3 838.70 1514.3 843.90 V845.90"/>
</g><g fill="#2444ab">
 <circle cx="1545.6" cy="523.50" r="1.25"/><circle cx="1545.6" cy="528.50" r="1.25"/><circle cx="1545.6" cy="533.50" r="1.25"/>
 <circle cx="1545.6" cy="585.96" r="1.25"/><circle cx="1545.6" cy="590.96" r="1.25"/><circle cx="1545.6" cy="595.96" r="1.25"/>
 <circle cx="1545.6" cy="648.42" r="1.25"/><circle cx="1545.6" cy="653.42" r="1.25"/><circle cx="1545.6" cy="658.42" r="1.25"/>
 <circle cx="1545.6" cy="710.88" r="1.25"/><circle cx="1545.6" cy="715.88" r="1.25"/><circle cx="1545.6" cy="720.88" r="1.25"/>
 <circle cx="1545.6" cy="773.34" r="1.25"/><circle cx="1545.6" cy="778.34" r="1.25"/><circle cx="1545.6" cy="783.34" r="1.25"/>
 <circle cx="1545.6" cy="835.80" r="1.25"/><circle cx="1545.6" cy="840.80" r="1.25"/><circle cx="1545.6" cy="845.80" r="1.25"/>
</g></svg>
<div class="a" style="left:1158.5px;top:359px;width:252.5px;height:112.6px;background:#fafbfc;border-radius:5px;box-shadow:0 2px 6px rgba(0,0,0,.16), 0 0 1px rgba(0,0,0,.12)"></div>
<div class="t" style="transform:scaleX(0.9524);transform-origin:0 0;left:1172px;top:368.5px;font-size:16.28px;color:#262626">Configuración</div>
<div class="t" style="transform:scaleX(0.9524);transform-origin:0 0;left:1172px;top:406.5px;font-size:16.17px;color:#a6a7aa">Descargar reportes (Max. 25) (0)</div>
<div class="t" style="transform:scaleX(0.9524);transform-origin:0 0;left:1172px;top:444.7px;font-size:16.07px;color:#a6a7aa">Eliminar solicitudes (0)</div>
<!-- ============ ANNOTATIONS ============ -->
<div class="a" style="left:1146.2px;top:298.8px;width:278.5px;height:192.4px;border:3px solid #e6260a"></div>
<svg width="1600" height="862" style="left:0;top:0">
 <g stroke="#e6260a" stroke-width="3" fill="none">
  <line x1="82" y1="165.6" x2="150.1" y2="165.6"/>
  <line x1="243" y1="337.3" x2="312" y2="337.3"/>
  <line x1="298" y1="550.4" x2="366.6" y2="550.4"/>
  <line x1="1296" y1="377.5" x2="1345.2" y2="377.3"/>
 </g>
 <g fill="#e6260a">
  <path d="M67.9 165.8 L82.9 158.1 L82.9 173.6 Z"/>
  <path d="M230 337.3 L244.7 330.2 L244.7 344.8 Z"/>
  <path d="M284.8 550.5 L299.4 543.2 L299.4 558 Z"/>
  <path d="M1283.4 377.9 L1298.3 370.9 L1298.3 385.4 Z"/>
 </g>
</svg>
<svg width="1600" height="862" style="left:0;top:0">
 <path d="M111.1 126.3 H115.1 V157.3 H111.1 V132.6 L103.8 137.6 V133.9 Z" fill="#f42a08"/>
 <path d="M259.7 307.8 C259.7 302.5 263.5 300.6 268 300.6 C272.7 300.6 276.5 303.2 276.5 308.2 C276.5 312.2 273.8 314.7 270.5 317.7 L259.8 328.1 H278.2" fill="none" stroke="#f42a08" stroke-width="3.4"/>
 <path d="M322 514 C322.6 511.6 325.4 510.6 329.6 510.6 C334.2 510.6 336.9 513.2 336.9 516.8 C336.9 520.8 333.7 523.7 327.9 523.7 C334.6 523.7 338.7 526.8 338.7 531.4 C338.7 535.9 335.2 538.4 330.2 538.4 C324.8 538.4 322 536 321.4 531.6" fill="none" stroke="#f42a08" stroke-width="3.4"/>
</svg>

<!-- ============ CHAT ============ -->
<div class="a" style="left:1282px;top:719.7px;width:44px;height:44px;border-radius:50%;background:#fff;box-shadow:0 10px 40px rgba(0,0,0,.14)"></div>
<div class="a" style="left:1335.4px;top:715px;width:246.6px;height:49px;border-radius:24.5px;background:#fff;box-shadow:0 10px 40px rgba(0,0,0,.14)"></div>
<svg width="1600" height="862" style="left:0;top:0">
 <g stroke="#222" stroke-width="1.4" stroke-linecap="round"><path d="M1297.6 735.5 L1310.4 748.3 M1310.4 735.5 L1297.6 748.3"/></g>
</svg>
<div class="t" style="left:1348.8px;top:731.5px;font-size:15.75px;color:#1a1a1a;-webkit-text-stroke-width:0.1px">Hola! ¿Cómo te puedo ayudar?</div>
<div class="a" style="left:1538px;top:800.5px;width:44px;height:44px;border-radius:50%;background:#2f4aa8;box-shadow:0 1px 4px rgba(47,74,168,.5)"></div>
<svg width="1600" height="862" style="left:0;top:0">
 <rect x="1552" y="817.5" width="15.7" height="9" rx="4.5" fill="#fff"/>
 <path d="M1562.5 826 L1565 829.3 L1565.5 826 Z" fill="#fff"/>
</svg>
</body>
</html>
